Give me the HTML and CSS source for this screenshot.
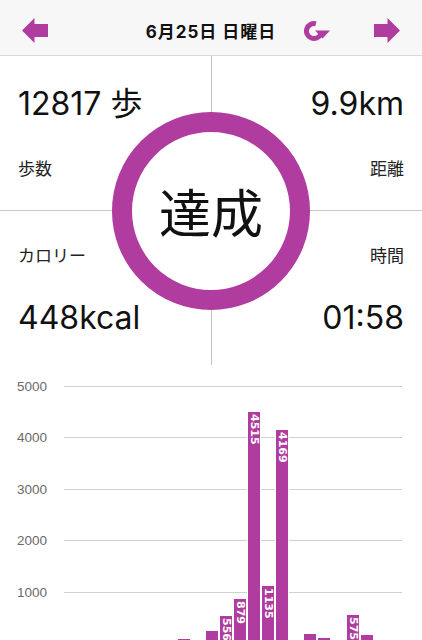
FILE: index.html
```html
<!DOCTYPE html>
<html lang="ja">
<head>
  <meta charset="UTF-8" />
  <meta name="viewport" content="width=device-width, initial-scale=1" />
  <title>歩数</title>
  <link rel="stylesheet" href="styles.css">
</head>
<body>

  <header class="topbar">
    <button class="nav-btn" aria-label="前の日">
      <svg width="26" height="25" viewBox="0 0 26 25"><polygon points="0,12.5 12.5,0 12.5,6 26,6 26,19 12.5,19 12.5,25" /></svg>
    </button>
    <h1 class="fecha">6月25日 日曜日</h1>
    <div class="topbar-right">
      <button class="nav-btn" aria-label="更新">
        <svg width="29" height="24" viewBox="0 0 29 24">
          <path d="M11.9 4.8 A7.5 7.5 0 1 0 16.8 15.2" fill="none" stroke-width="5" />
          <polygon points="11,11.5 26,11.5 18.5,19.5" />
        </svg>
      </button>
      <button class="nav-btn" aria-label="次の日">
        <svg width="26" height="25" viewBox="0 0 26 25"><polygon points="26,12.5 13.5,0 13.5,6 0,6 0,19 13.5,19 13.5,25" /></svg>
      </button>
    </div>
  </header>

  <section class="resumen">
    <div class="celda arriba">
      <div class="valor">12817 歩</div>
      <div class="etiqueta">歩数</div>
    </div>
    <div class="celda arriba der">
      <div class="valor">9.9km</div>
      <div class="etiqueta">距離</div>
    </div>
    <div class="celda abajo">
      <div class="etiqueta">カロリー</div>
      <div class="valor">448kcal</div>
    </div>
    <div class="celda abajo der">
      <div class="etiqueta">時間</div>
      <div class="valor">01:58</div>
    </div>
    <div class="anillo"><span>達成</span></div>
  </section>

  <section class="grafico">
    <div class="rejilla">
      <div class="fila"><span class="eje">5000</span><span class="linea"></span></div>
      <div class="fila"><span class="eje">4000</span><span class="linea"></span></div>
      <div class="fila"><span class="eje">3000</span><span class="linea"></span></div>
      <div class="fila"><span class="eje">2000</span><span class="linea"></span></div>
      <div class="fila"><span class="eje">1000</span><span class="linea"></span></div>
      <div class="barras" id="barras"></div>
    </div>
  </section>

  <script>
    // pasos por hora (0 - 23)
    const pasos = [0,0,0,0,0,0,0,0,116,50,272,556,879,4515,1135,4169,0,213,136,0,575,194,7,0];
    const maximo = 5000;
    const alto = 257.5;

    const contenedor = document.getElementById('barras');
    pasos.forEach(valor => {
      const hueco = document.createElement('div');
      hueco.className = 'hueco';
      if (valor > 0) {
        const barra = document.createElement('div');
        barra.className = 'barra';
        barra.style.height = (valor / maximo * alto) + 'px';
        if (valor >= 500) {
          barra.innerHTML = `<span class="cifra">${valor}</span>`;
        }
        hueco.appendChild(barra);
      }
      contenedor.appendChild(hueco);
    });
  </script>
</body>
</html>
```

FILE: styles.css
```css
body {
  margin: 0;
  font-family: Inter, "Noto Sans CJK JP", sans-serif;
  background: #fff;
  color: #111;
}

/* barra superior */
.topbar {
  display: grid;
  grid-template-columns: 1fr auto 1fr;
  align-items: center;
  height: 56px;
  box-sizing: border-box;
  padding: 6px 22px 0;
  background: #f7f7f7;
  border-bottom: 1px solid #d9d9d9;
}
.nav-btn {
  border: none;
  background: none;
  padding: 0;
  display: flex;
  cursor: pointer;
}
.nav-btn svg {
  fill: #b03c9f;
  stroke: #b03c9f;
}
.nav-btn svg polygon {
  stroke: none;
}
.fecha {
  margin: 0;
  font-size: 17px;
  font-weight: bold;
  letter-spacing: 1px;
}
.topbar-right {
  justify-self: end;
  display: flex;
  align-items: center;
  gap: 41px;
}

/* resumen del día */
.resumen {
  position: relative;
  display: grid;
  grid-template-columns: 1fr 1fr;
  grid-template-rows: 155px 154px;
}
.celda {
  padding: 0 18px;
}
.celda.arriba {
  padding-top: 28px;
  border-bottom: 1px solid #c9c9c9;
}
.celda.abajo {
  padding-top: 32px;
}
.celda.der {
  text-align: right;
  border-left: 1px solid #c4c4c4;
}
.valor {
  font-size: 32px;
  line-height: 40px;
  color: #111;
}
.etiqueta {
  font-family: "Noto Sans CJK JP", sans-serif;
  font-size: 17px;
  line-height: 24px;
  color: #222;
}
.arriba .valor {
  margin-bottom: 32px;
}
.abajo .etiqueta {
  margin-bottom: 31px;
}
.anillo {
  position: absolute;
  left: 50%;
  top: 50%;
  transform: translate(-50%, -50%);
  width: 198px;
  height: 198px;
  box-sizing: border-box;
  border: 20px solid #b03c9f;
  border-radius: 50%;
  background: #fff;
  display: flex;
  align-items: center;
  justify-content: center;
}
.anillo span {
  font-family: "Noto Sans CJK JP", sans-serif;
  font-size: 52px;
  line-height: 1;
  color: #111;
}

/* gráfico por horas */
.grafico {
  padding: 14px 20px 0 0;
}
.rejilla {
  position: relative;
  height: 265px;
}
.fila {
  display: flex;
  align-items: center;
  height: 14px;
  margin-bottom: 37.5px;
}
.eje {
  width: 47px;
  margin-right: 17px;
  text-align: right;
  font-family: "Liberation Sans", sans-serif;
  font-size: 13.5px;
  color: #6a6a6a;
}
.linea {
  flex: 1;
  height: 1px;
  background: #d0d0d0;
}
.barras {
  position: absolute;
  left: 64px;
  right: 0;
  top: 7px;
  height: 257.5px;
  display: flex;
  align-items: flex-end;
}
.hueco {
  flex: 1;
  display: flex;
  align-items: flex-end;
}
.barra {
  width: 100%;
  box-sizing: border-box;
  border: 1px solid #fff;
  border-bottom: none;
  background: #b03c9f;
  display: flex;
  flex-direction: column;
  align-items: center;
  overflow: hidden;
}
.cifra {
  writing-mode: vertical-rl;
  margin-top: 2px;
  font-family: "DejaVu Sans", sans-serif;
  font-weight: bold;
  font-size: 11px;
  line-height: 12px;
  color: #fff;
}
```
